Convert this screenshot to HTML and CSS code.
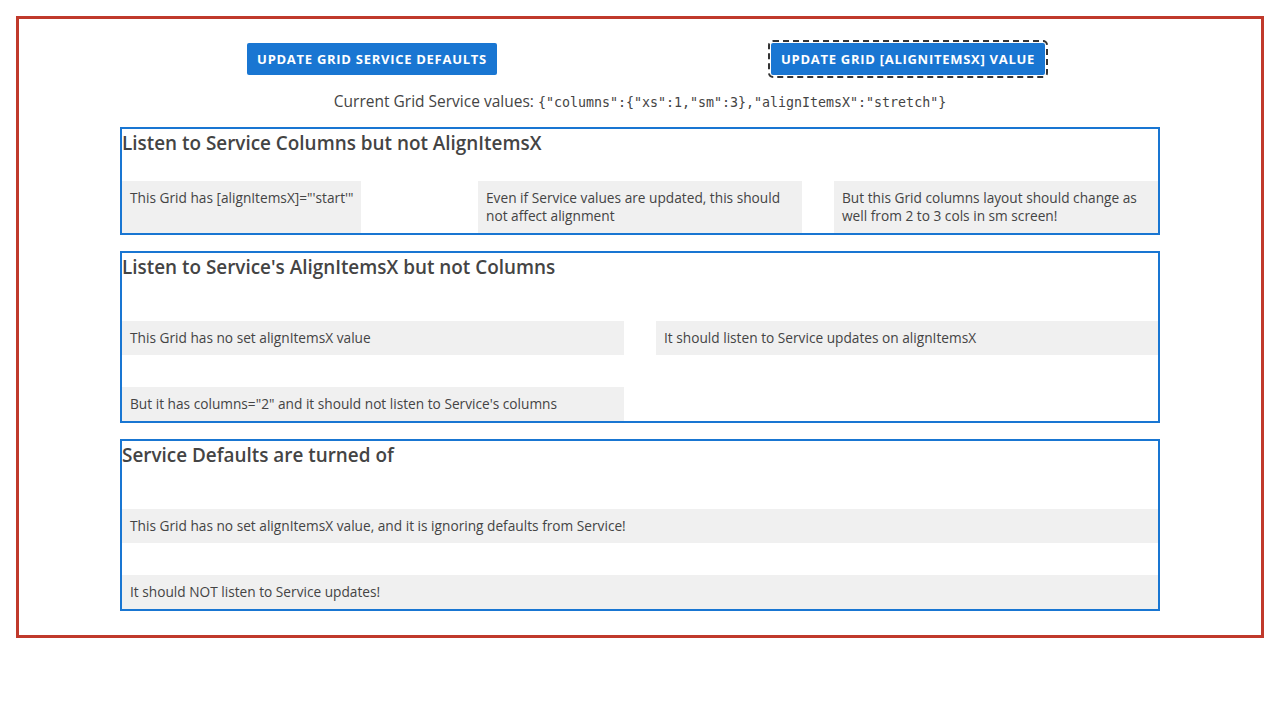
FILE: index.html
```html
<!DOCTYPE html>
<html>
<head>
<meta charset="utf-8">
<link rel="stylesheet" href="styles.css">
</head>
<body>
<div class="frame">
  <div class="actions">
    <button class="btn">Update Grid Service Defaults</button>
    <button class="btn focused">Update Grid [alignItemsX] value</button>
  </div>
  <p class="current">Current Grid Service values: <code>{"columns":{"xs":1,"sm":3},"alignItemsX":"stretch"}</code></p>

  <section class="demo">
    <h2>Listen to Service Columns but not AlignItemsX</h2>
    <div class="grid cols-3 start first">
      <div class="cell">This Grid has [alignItemsX]="'start'"</div>
      <div class="cell">Even if Service values are updated, this should not affect alignment</div>
      <div class="cell">But this Grid columns layout should change as well from 2 to 3 cols in sm screen!</div>
    </div>
  </section>

  <section class="demo">
    <h2>Listen to Service's AlignItemsX but not Columns</h2>
    <div class="grid cols-2">
      <div class="cell">This Grid has no set alignItemsX value</div>
      <div class="cell">It should listen to Service updates on alignItemsX</div>
      <div class="cell">But it has columns="2" and it should not listen to Service's columns</div>
    </div>
  </section>

  <section class="demo">
    <h2>Service Defaults are turned of</h2>
    <div class="grid cols-1">
      <div class="cell">This Grid has no set alignItemsX value, and it is ignoring defaults from Service!</div>
      <div class="cell">It should NOT listen to Service updates!</div>
    </div>
  </section>
</div>
</body>
</html>
```

FILE: styles.css
```css
html, body {
  margin: 0;
  padding: 0;
  background: #fff;
}
body {
  padding: 16px;
  font-family: "Open Sans", "Noto Sans", sans-serif;
  color: #444;
}
.frame {
  border: 3px solid #c0392b;
  padding: 24px 0 24px;
  box-sizing: border-box;
}
.actions {
  width: 1040px;
  margin: 0 auto;
  display: grid;
  grid-template-columns: 1fr 1fr;
  column-gap: 32px;
  justify-items: center;
}
.btn {
  background: #1976d2;
  color: #fff;
  border: none;
  border-radius: 2px;
  height: 32px;
  padding: 0 10px;
  font-family: "Open Sans", "Noto Sans", sans-serif;
  font-weight: 700;
  font-size: 13px;
  letter-spacing: 0.72px;
  text-transform: uppercase;
  cursor: pointer;
}
.focused {
  outline: 2px dashed #333;
  outline-offset: 1px;
}
.current {
  margin: 16px 0 16px;
  height: 20px;
  text-align: center;
  font-size: 15.5px;
  line-height: 20px;
}
.current code {
  font-family: "DejaVu Sans Mono", monospace;
  font-size: 13.3px;
  line-height: 1;
}
.demo {
  width: 1040px;
  margin: 0 auto 16px;
  border: 2px solid #1976d2;
  box-sizing: border-box;
}
.demo:last-child {
  margin-bottom: 0;
}
.demo h2 {
  margin: 0;
  font-size: 18.9px;
  line-height: 28px;
  font-weight: 600;
  color: #444;
}
.grid {
  display: grid;
  column-gap: 32px;
  row-gap: 32px;
  margin-top: 40px;
}
.grid.first {
  margin-top: 24px;
}
.cols-3 { grid-template-columns: repeat(3, 1fr); }
.cols-2 { grid-template-columns: repeat(2, 1fr); }
.cols-1 { grid-template-columns: 1fr; }
.start { justify-items: start; }
.cell {
  background: #f0f0f0;
  padding: 8px;
  font-size: 13.7px;
  line-height: 18px;
}
```
